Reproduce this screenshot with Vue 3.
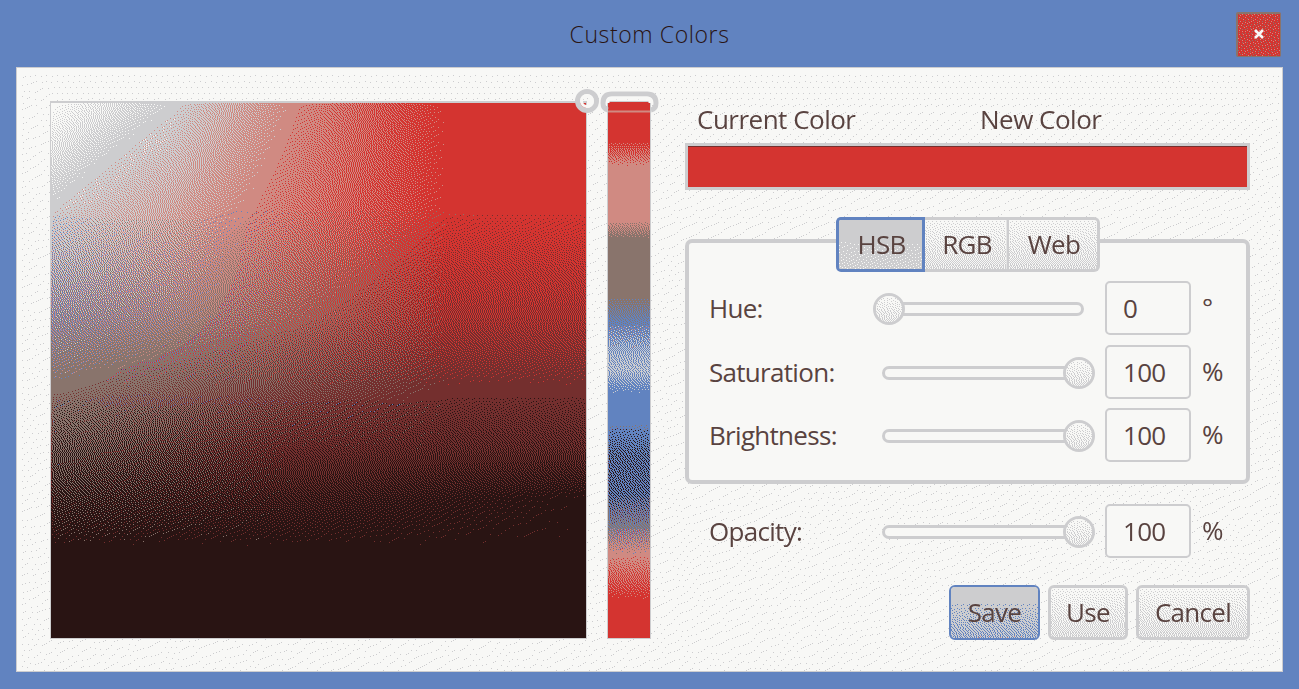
<script setup>
const W = [248, 248, 246]
const G = [205, 205, 207]
const P = [208, 138, 130]
const B = [137, 116, 108]
const D = [116, 47, 46]
const K = [41, 20, 19]
const R = [212, 52, 48]
const U = [97, 131, 192]
const palette = [W, G, P, B, D, K, R, U]

const clamp = (v) => Math.max(0, Math.min(255, v))
const mix = (a, b, t) => a.map((v, i) => v + (b[i] - v) * t)

// Locates t between two neighbouring stops: [index, fraction].
function locate(stops, t) {
  let i = 0
  while (i < stops.length - 2 && t > stops[i + 1]) i++
  return [i, Math.max(0, Math.min(1, (t - stops[i]) / (stops[i + 1] - stops[i])))]
}

// Paints a colour field with the limited palette using error diffusion.
function paint(canvas, field) {
  const w = canvas.width
  const h = canvas.height
  const ctx = canvas.getContext('2d')
  const image = ctx.createImageData(w, h)
  const buf = new Float32Array(w * h * 3)
  for (let y = 0; y < h; y++) {
    for (let x = 0; x < w; x++) buf.set(field(x / (w - 1), y / (h - 1)), (y * w + x) * 3)
  }
  const spread = [[1, 0, 0.5], [-1, 1, 0.25], [0, 1, 0.25]]
  for (let y = 0; y < h; y++) {
    for (let x = 0; x < w; x++) {
      const i = y * w + x
      let best = palette[0]
      let dist = Infinity
      for (const p of palette) {
        const d = (buf[i * 3] - p[0]) ** 2 + (buf[i * 3 + 1] - p[1]) ** 2 + (buf[i * 3 + 2] - p[2]) ** 2
        if (d < dist) { dist = d; best = p }
      }
      for (let c = 0; c < 3; c++) {
        const err = buf[i * 3 + c] - best[c]
        image.data[i * 4 + c] = best[c]
        for (const [dx, dy, k] of spread) {
          if (x + dx < 0 || x + dx >= w || y + dy >= h) continue
          const j = (i + dy * w + dx) * 3 + c
          buf[j] = clamp(buf[j] + err * k)
        }
      }
      image.data[i * 4 + 3] = 255
    }
  }
  ctx.putImageData(image, 0, 0)
}

const vDither = { mounted: (el, binding) => paint(el, binding.value) }

const squareX = [0, 0.23, 0.45, 0.74, 1]
const squareY = [0, 0.19, 0.4, 0.53, 0.65, 0.74, 0.83, 1]
const squareGrid = [
  [W, G, P, R, R],
  [G, mix(G, P, 0.55), mix(P, R, 0.25), R, R],
  [[150, 138, 154], [162, 128, 130], [165, 98, 91], mix(R, D, 0.52), mix(R, D, 0.52)],
  [B, mix(B, D, 0.3), mix(B, D, 0.65), D, D],
  [mix(B, K, 0.45), mix([118, 78, 73], K, 0.38), mix(D, K, 0.3), mix(D, K, 0.42), mix(D, K, 0.42)],
  [mix(B, K, 0.75), mix([118, 70, 66], K, 0.72), mix(D, K, 0.72), mix(D, K, 0.88), K],
  [K, K, K, K, K],
  [K, K, K, K, K]
]
function squareField(x, y) {
  const [i, s] = locate(squareX, x)
  const [j, t] = locate(squareY, y)
  const a = squareGrid[j]
  const b = squareGrid[j + 1]
  return mix(mix(a[i], a[i + 1], s), mix(b[i], b[i + 1], s), t)
}

const hueY = [0, 0.07, 0.12, 0.22, 0.255, 0.36, 0.41, 0.46, 0.5, 0.545, 0.595, 0.66, 0.73, 0.79, 0.845, 0.93, 1]
const hueColors = [R, R, P, P, B, B, mix(B, U, 0.75), mix(U, G, 0.5), mix(U, G, 0.68), U, U, mix(U, K, 0.36), mix(U, K, 0.36), [126, 116, 140], P, R, R]
function hueField(x, y) {
  const [i, t] = locate(hueY, y)
  return mix(hueColors[i], hueColors[i + 1], t)
}

const panelField = () => [246.6, 246.6, 244.9]
const buttonField = (x, y) => mix([244, 244, 243], [222, 222, 222], y)
const activeTabField = (x, y) => mix([203, 203, 206], [212, 212, 213], y)
const saveField = (x, y) => mix(G, [158, 172, 200], Math.max(0, y * 1.3 - 0.3))
const closeField = () => [205, 66, 61]

const rows = [
  { label: 'Hue:', value: '0', unit: '°', low: true },
  { label: 'Saturation:', value: '100', unit: '%' },
  { label: 'Brightness:', value: '100', unit: '%' }
]
const opacity = [{ label: 'Opacity:', value: '100', unit: '%' }]
const groups = [{ name: 'channels', rows }, { name: 'opacity', rows: opacity }]
const tabs = [
  { label: 'HSB', w: 89, field: activeTabField, active: true },
  { label: 'RGB', w: 84, field: buttonField },
  { label: 'Web', w: 91, field: buttonField }
]
const actions = [
  { label: 'Save', w: 91, field: saveField, primary: true },
  { label: 'Use', w: 80, field: buttonField },
  { label: 'Cancel', w: 114, field: buttonField }
]
</script>

<template>
  <div class="window">
    <header>
      <h1>Custom Colors</h1>
      <button class="close" aria-label="Close">
        <canvas v-dither="closeField" width="45" height="45" />
        <svg width="10" height="10" viewBox="0 0 10 10"><path d="M1 1L9 9M9 1L1 9" /></svg>
      </button>
    </header>
    <main>
      <canvas v-dither="panelField" class="panel-bg" width="1265" height="603" />
      <div class="square">
        <canvas v-dither="squareField" width="535" height="535" />
        <svg class="dot" width="30" height="30" viewBox="0 0 30 30">
          <circle cx="15" cy="15" r="9.5" class="halo" />
          <circle cx="15" cy="15" r="5.5" class="ring" />
        </svg>
      </div>
      <div class="hue">
        <canvas v-dither="hueField" width="42" height="536" />
        <svg class="bar" width="60" height="28" viewBox="0 0 60 28">
          <path d="M9 21Q4 20 4 14Q4 5 13 5H48Q57 5 57 14Q57 20 52 21" class="halo" />
          <path d="M9 14V11.5Q9 9 12 9H48Q51 9 51 11.5V14" class="inner" />
          <path d="M9 22.5H51" class="under" />
        </svg>
      </div>
      <section>
        <div class="captions"><span>Current Color</span><span>New Color</span></div>
        <div class="swatch" />
        <div v-for="g in groups" :key="g.name" :class="g.name">
          <div v-if="g.name === 'channels'" class="tabs">
            <button v-for="t in tabs" :key="t.label" :class="{ active: t.active }" :style="{ width: t.w + 'px' }">
              <canvas v-dither="t.field" :width="t.w" height="55" /><span>{{ t.label }}</span>
            </button>
          </div>
          <div v-for="r in g.rows" :key="r.label" class="row">
            <label>{{ r.label }}</label>
            <div class="slider" :class="{ low: r.low }"><i /><b><canvas v-dither="buttonField" width="32" height="32" /></b></div>
            <div class="field">{{ r.value }}</div>
            <span class="unit">{{ r.unit }}</span>
          </div>
        </div>
        <div class="actions">
          <button v-for="a in actions" :key="a.label" :class="{ primary: a.primary }" :style="{ width: a.w + 'px' }">
            <canvas v-dither="a.field" :width="a.w" height="55" /><span>{{ a.label }}</span>
          </button>
        </div>
      </section>
    </main>
  </div>
</template>

<style>
body { margin: 0; background: #6183c0; overflow: hidden; }
</style>

<style scoped>
* { box-sizing: border-box; }
.window { width: 1299px; height: 689px; background: #6183c0; font: 26px/36px "Open Sans", "Noto Sans", sans-serif; color: #594340; letter-spacing: -0.7px; }
canvas { display: block; }
button { font: inherit; letter-spacing: inherit; color: inherit; padding: 0; position: relative; overflow: hidden; background: #e4e4e4; border: 3px solid #cdcdcf; border-radius: 6px; height: 55px; }
button canvas { position: absolute; top: -3px; left: -3px; }
button span { position: relative; top: -1px; }
header { height: 68px; position: relative; display: flex; justify-content: center; }
h1 { margin: 17px 0 0; font-size: 23px; line-height: 34px; font-weight: 300; letter-spacing: 0.6px; color: #291413; }
header .close { position: absolute; right: 18px; top: 12px; width: 45px; height: 45px; border: 1px solid #89746c; border-width: 2px 1px 1px 2px; border-radius: 2px; background: #d43430; display: flex; align-items: center; justify-content: center; }
.close svg { position: relative; top: -1px; }
.close path { stroke: #f8f8f6; stroke-width: 2.6; fill: none; }
main { position: relative; width: 1267px; height: 605px; margin-left: 16px; margin-top: -1px; border: 1px solid #cdcdcf; display: flex; padding: 33px 0 0 33px; }
.panel-bg { position: absolute; inset: 0; }
.square { position: relative; width: 537px; height: 538px; border: 1px solid #cdcdcf; border-top-width: 2px; background: #291413; flex: none; }
.hue { position: relative; width: 44px; height: 538px; margin-left: 20px; border: 1px solid #cdcdcf; flex: none; }
.dot { position: absolute; right: -16px; top: -17px; }
.bar { position: absolute; left: -9px; top: -13px; }
.halo { fill: none; stroke: #cdcdcf; stroke-width: 5; }
.ring { fill: none; stroke: #f8f8f6; stroke-width: 3; }
.inner { fill: none; stroke: #f8f8f6; stroke-width: 3; }
.under { stroke: #d08a82; stroke-width: 2; }
section { position: relative; width: 565px; margin-left: 34px; }
.captions { display: flex; height: 42px; padding: 0 0 0 12px; letter-spacing: -0.5px; }
.captions span:first-child { width: 283px; }
.swatch { width: 565px; height: 47px; background: #d43430; border: 3px solid #cdcdcf; box-shadow: inset 0 1px #742f2e; }
.channels { position: relative; height: 245px; margin-top: 49px; border: 4px solid #cdcdcf; border-radius: 7px; background: #f8f8f6; padding: 38px 0 0 20px; }
.tabs { position: absolute; left: 147px; top: -26px; display: flex; }
.tabs button { border-radius: 0; border-left-width: 0; border-right-width: 2px; }
.tabs button:last-child { border-radius: 0 6px 6px 0; border-right-width: 3px; }
.tabs .active { border: 3px solid #6183c0; border-radius: 5px 0 0 5px; }
.tabs span { left: 1px; }
.row { display: grid; grid-template-columns: 154px 222px 86px 40px; column-gap: 10px; align-items: center; height: 54px; margin-bottom: 9.6px; }
.unit { padding-left: 1px; position: relative; top: -1px; }
.field { height: 54px; border: 2px solid #cdcdcf; border-radius: 5px; background: #f8f8f6; padding: 7px 0 0 16px; }
.slider { position: relative; top: 1px; height: 32px; display: flex; align-items: center; padding: 0 11px 0 9px; }
.slider i { flex: 1; height: 14px; border: 3px solid #cdcdcf; border-radius: 7px; background: #f8f8f6; }
.slider b { position: absolute; right: 0; top: 0; width: 32px; height: 32px; border-radius: 50%; border: 3px solid #cdcdcf; overflow: hidden; }
.slider.low b { right: auto; left: 0; }
.opacity { padding: 20px 0 0 24px; }
.actions { position: absolute; right: 0; top: 484px; display: flex; gap: 8px; }
.actions .primary { border: 2px solid #6183c0; }
.primary canvas { top: -2px; left: -2px; }
</style>
